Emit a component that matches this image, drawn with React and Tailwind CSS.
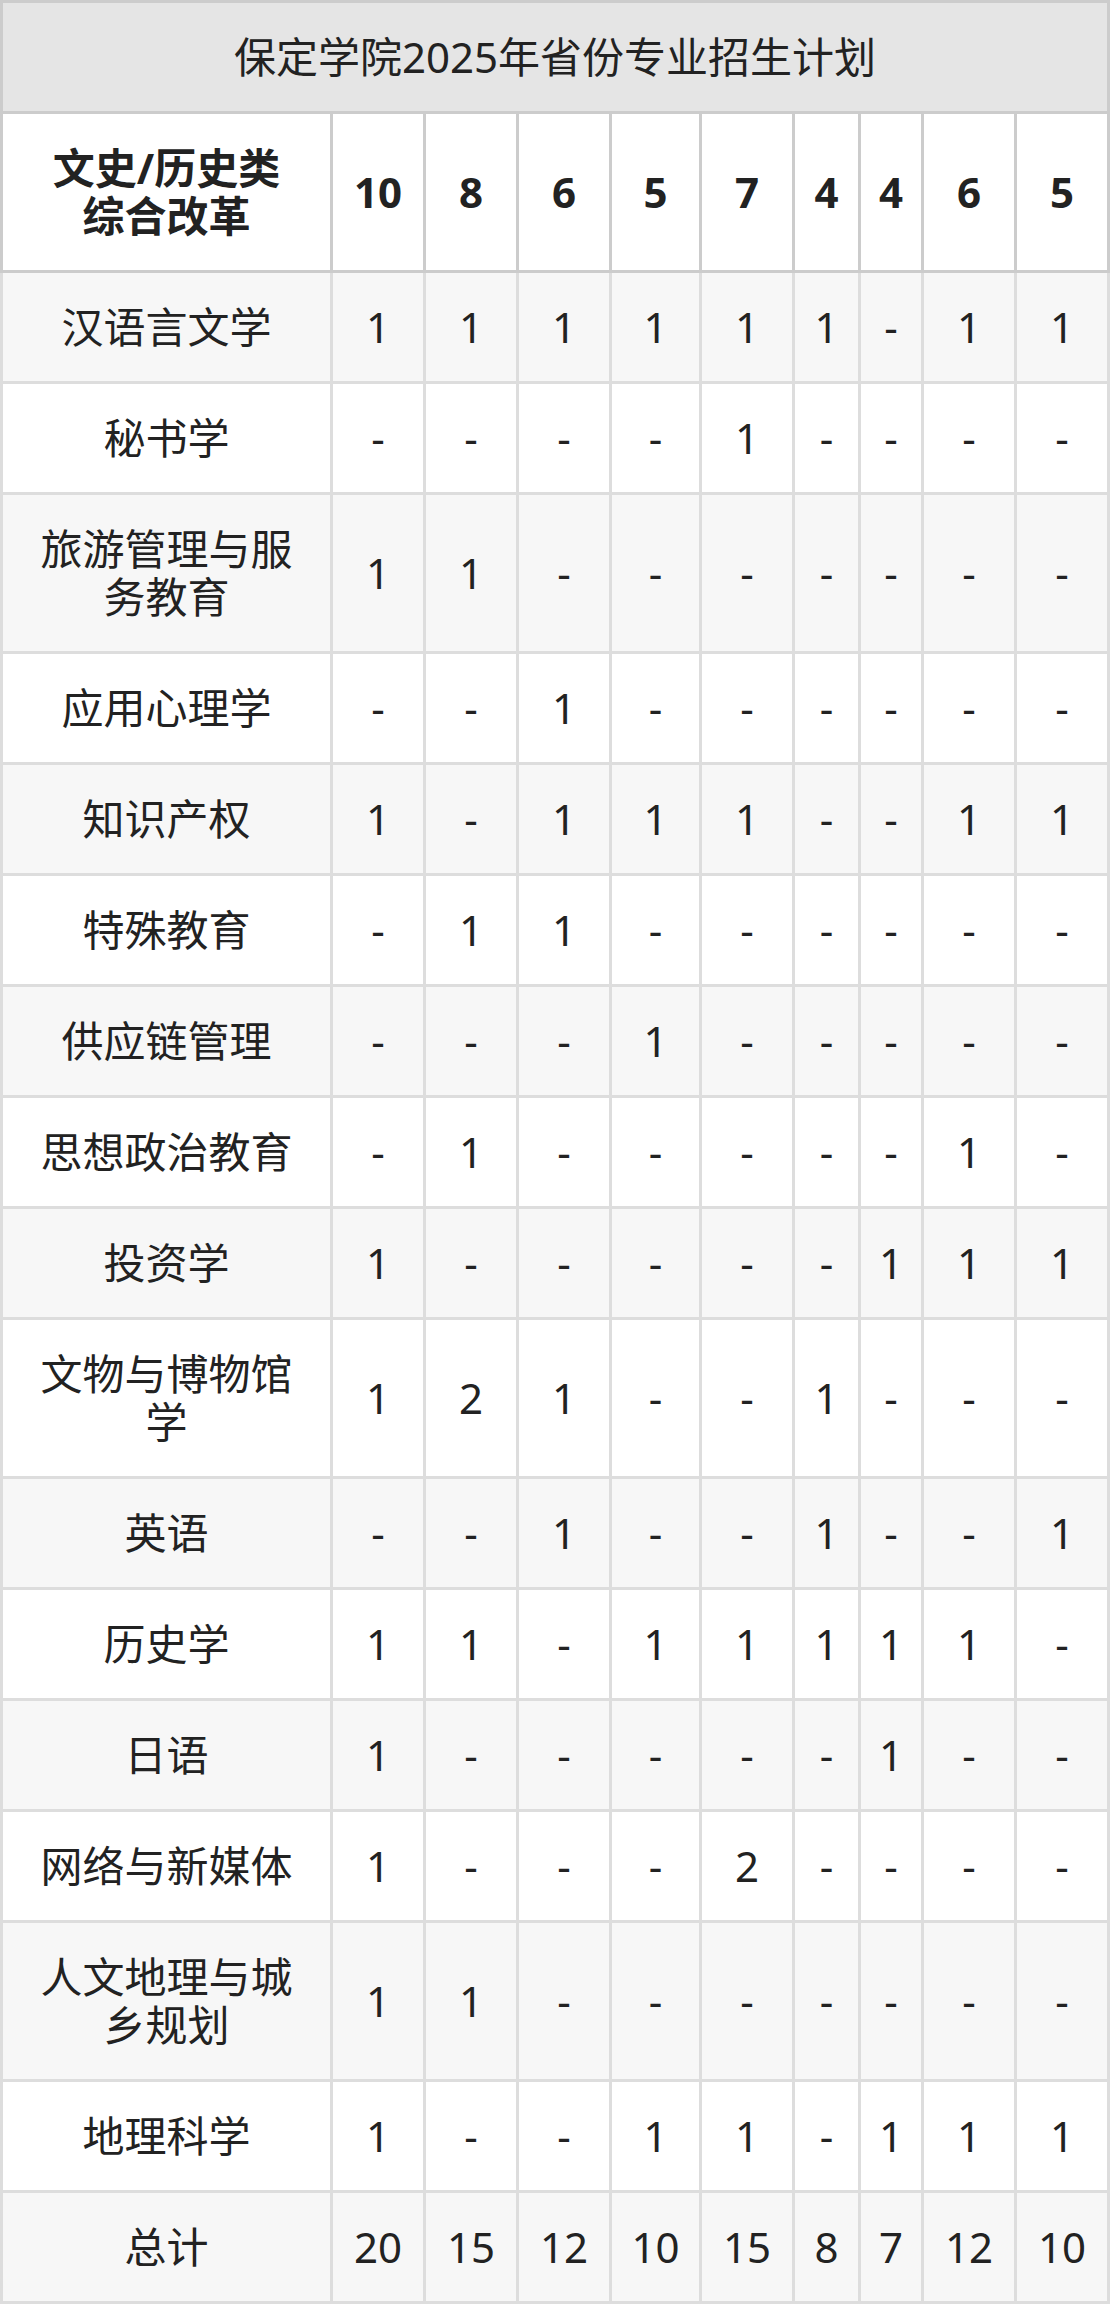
import React from "react";

const colWidths = ["w-[93px]", "w-[93px]", "w-[93px]", "w-[90px]", "w-[93px]", "w-[66px]", "w-[63px]", "w-[93px]", "w-[93px]"];

const headerCounts = ["10", "8", "6", "5", "7", "4", "4", "6", "5"];

const rows = [
  { name: "汉语言文学", values: "1 1 1 1 1 1 - 1 1" },
  { name: "秘书学", values: "- - - - 1 - - - -" },
  { name: "旅游管理与服务教育", values: "1 1 - - - - - - -" },
  { name: "应用心理学", values: "- - 1 - - - - - -" },
  { name: "知识产权", values: "1 - 1 1 1 - - 1 1" },
  { name: "特殊教育", values: "- 1 1 - - - - - -" },
  { name: "供应链管理", values: "- - - 1 - - - - -" },
  { name: "思想政治教育", values: "- 1 - - - - - 1 -" },
  { name: "投资学", values: "1 - - - - - 1 1 1" },
  { name: "文物与博物馆学", values: "1 2 1 - - 1 - - -" },
  { name: "英语", values: "- - 1 - - 1 - - 1" },
  { name: "历史学", values: "1 1 - 1 1 1 1 1 -" },
  { name: "日语", values: "1 - - - - - 1 - -" },
  { name: "网络与新媒体", values: "1 - - - 2 - - - -" },
  { name: "人文地理与城乡规划", values: "1 1 - - - - - - -" },
  { name: "地理科学", values: "1 - - 1 1 - 1 1 1" },
  { name: "总计", values: "20 15 12 10 15 8 7 12 10" },
];

function BodyRow({ row, striped }) {
  const cells = row.values.split(" ");
  return (
    <div className={`flex ${striped ? "bg-[#f7f7f7]" : "bg-white"}`}>
      <div className="flex w-[333px] shrink-0 items-center justify-center border-b-[3px] border-l-[3px] border-r-[3px] border-[#dddddd] px-[36px] py-[30px] text-center">
        {row.name}
      </div>
      {cells.map((value, i) => (
        <div
          key={i}
          className={`flex ${colWidths[i]} shrink-0 items-center justify-center border-b-[3px] border-r-[3px] border-[#dddddd] py-[30px] text-center`}
        >
          {value}
        </div>
      ))}
    </div>
  );
}

export default function App() {
  return (
    <div
      className="w-[1110px] bg-white text-[42px] leading-[48px] text-[#222222]"
      style={{ fontFamily: '"Noto Sans", "Noto Sans CJK SC", sans-serif' }}
    >
      <div className="flex items-center justify-center border-[3px] border-[#cccccc] bg-[#e5e5e5] py-[30px]">
        保定学院2025年省份专业招生计划
      </div>

      <div className="flex bg-white font-bold">
        <div className="flex w-[333px] shrink-0 items-center justify-center border-b-[3px] border-l-[3px] border-r-[3px] border-[#cccccc] px-[36px] py-[30px] text-center">
          <span>
            文史/历史类
            <br />
            综合改革
          </span>
        </div>
        {headerCounts.map((count, i) => (
          <div
            key={i}
            className={`flex ${colWidths[i]} shrink-0 items-center justify-center border-b-[3px] border-r-[3px] border-[#cccccc] text-center`}
          >
            {count}
          </div>
        ))}
      </div>

      {rows.map((row, i) => (
        <BodyRow key={row.name} row={row} striped={i % 2 === 0} />
      ))}
    </div>
  );
}
